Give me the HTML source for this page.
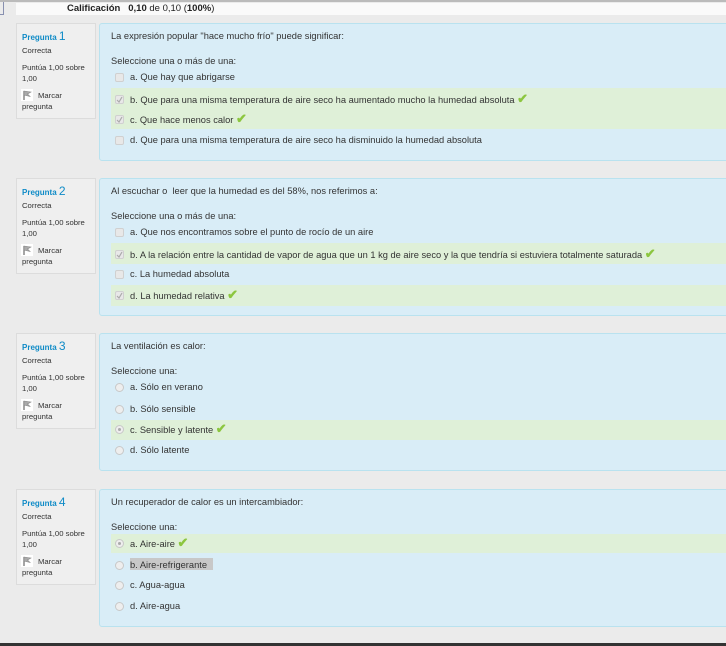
<!DOCTYPE html>
<html><head><meta charset="utf-8"><style>
body{margin:0;width:726px;height:646px;background:#ebebeb;font-family:"Liberation Sans",Tahoma,sans-serif;font-size:9.3px;color:#333;position:relative;overflow:hidden}
.a{position:absolute;white-space:nowrap;line-height:12px}
.info{position:absolute;left:16px;width:78px;height:94px;background:#efefef;border:1px solid #dcdcdc;font-size:7.5px;color:#444}
.cont{position:absolute;left:99px;width:640px;height:136px;background:#d9edf7;border:1px solid #b9e2ef;border-radius:3px}
.g{position:absolute;left:111px;right:0;background:#dff0d8}
.cb{position:absolute;width:7px;height:7px;border:1px solid #d0d0d0;border-radius:2px;background:#e8e8e8}
.rd{position:absolute;width:7px;height:7px;border:1px solid #c8c8c8;border-radius:50%;background:#eee}
.ck{color:#8cc63f;font-size:13px;font-weight:bold}
.pq{color:#0f8bc7;font-weight:bold;font-size:8px}
.pq b{font-size:12px;font-weight:normal}
.sm{font-size:7.7px;color:#333}
</style></head><body>
<div style="position:absolute;left:0;top:0;width:726px;height:2px;background:#bbb"></div>
<div style="position:absolute;left:0;top:2px;width:3px;height:12px;border:1px solid #8890b0;border-left:none;border-top:none"></div>
<div style="position:absolute;left:16px;top:3px;width:710px;height:12px;background:#fafafa"></div>
<div class="a" style="left:67px;top:3px;color:#222;font-size:9.5px"><b>Calificación</b>&nbsp;&nbsp; <b>0,10</b> de 0,10 (<b>100%</b>)</div>
<div style="position:absolute;left:0;top:643px;width:726px;height:3px;background:#333"></div>

<div class="info" style="top:23px"></div>
<div class="cont" style="top:23px"></div>
<div class="g" style="top:88px;height:41px"></div>
<div class="info" style="top:178px"></div>
<div class="cont" style="top:178px"></div>
<div class="g" style="top:243px;height:21px"></div>
<div class="g" style="top:285px;height:21px"></div>
<div class="info" style="top:333px"></div>
<div class="cont" style="top:333px"></div>
<div class="g" style="top:420px;height:20px"></div>
<div class="info" style="top:489px"></div>
<div class="cont" style="top:489px"></div>
<div class="g" style="top:534px;height:19px"></div>
<div style="position:absolute;left:130px;top:558px;width:83px;height:12px;background:#c8c8c8"></div>

<script>
const Q=[
 {T:23,n:1,t:'La expresión popular "hace mucho frío" puede significar:',s:'Seleccione una o más de una:',c:1,o:[['a. Que hay que abrigarse',0,0],['b. Que para una misma temperatura de aire seco ha aumentado mucho la humedad absoluta',1,1],['c. Que hace menos calor',1,1],['d. Que para una misma temperatura de aire seco ha disminuido la humedad absoluta',0,0]]},
 {T:178,n:2,t:'Al escuchar o &nbsp;leer que la humedad es del 58%, nos referimos a:',s:'Seleccione una o más de una:',c:1,o:[['a. Que nos encontramos sobre el punto de rocío de un aire',0,0],['b. A la relación entre la cantidad de vapor de agua que un 1 kg de aire seco y la que tendría si estuviera totalmente saturada',1,1],['c. La humedad absoluta',0,0],['d. La humedad relativa',1,1]]},
 {T:333,n:3,t:'La ventilación es calor:',s:'Seleccione una:',c:0,o:[['a. Sólo en verano',0,0],['b. Sólo sensible',0,0],['c. Sensible y latente',1,1],['d. Sólo latente',0,0]]},
 {T:489,n:4,t:'Un recuperador de calor es un intercambiador:',s:'Seleccione una:',c:0,o:[['a. Aire-aire',1,1],['b. Aire-refrigerante',0,0],['c. Agua-agua',0,0],['d. Aire-agua',0,0]]}
];
let h='';
const off=[54,76,96,117];
for(const q of Q){const T=q.T;
 h+=`<div class="a pq" style="left:22px;top:${T+7}px">Pregunta <b>${q.n}</b></div>`;
 h+=`<div class="a sm" style="left:22px;top:${T+22}px">Correcta</div>`;
 h+=`<div class="a sm" style="left:22px;top:${T+39}px">Puntúa 1,00 sobre</div>`;
 h+=`<div class="a sm" style="left:22px;top:${T+50}px">1,00</div>`;
 h+=`<div style="position:absolute;left:21px;top:${T+66}px;width:12px;height:12px;background:#fff"><svg width="12" height="12"><path d="M3 2 L3 11" stroke="#777" stroke-width="1.3"/><path d="M3 2 L10 3 L6.5 5 L9 7.5 L3 6 Z" fill="#aaa" stroke="#888" stroke-width="0.6"/></svg></div>`;
 h+=`<div class="a sm" style="left:38px;top:${T+67}px">Marcar</div>`;
 h+=`<div class="a sm" style="left:22px;top:${T+78}px">pregunta</div>`;
 h+=`<div class="a" style="left:111px;top:${T+7}px">${q.t}</div>`;
 h+=`<div class="a" style="left:111px;top:${T+32}px">${q.s}</div>`;
 q.o.forEach((o,i)=>{const y=T+off[i];
  h+=`<div class="${q.c?'cb':'rd'}" style="left:115px;top:${y-4}px"></div>`;
  if(o[1]) h+= q.c?`<svg style="position:absolute;left:116px;top:${y-3}px" width="7" height="7"><path d="M1 4 L3 6 L6 1" stroke="#aaa" stroke-width="1.2" fill="none"/></svg>`:`<div style="position:absolute;left:118px;top:${y-1}px;width:3px;height:3px;border-radius:50%;background:#aaa"></div>`;
  h+=`<div class="a" style="left:130px;top:${y-6}px">${o[0]}${o[2]?' <span class="ck">✔</span>':''}</div>`;
 });
}
document.write(h);
</script>
</body></html>
